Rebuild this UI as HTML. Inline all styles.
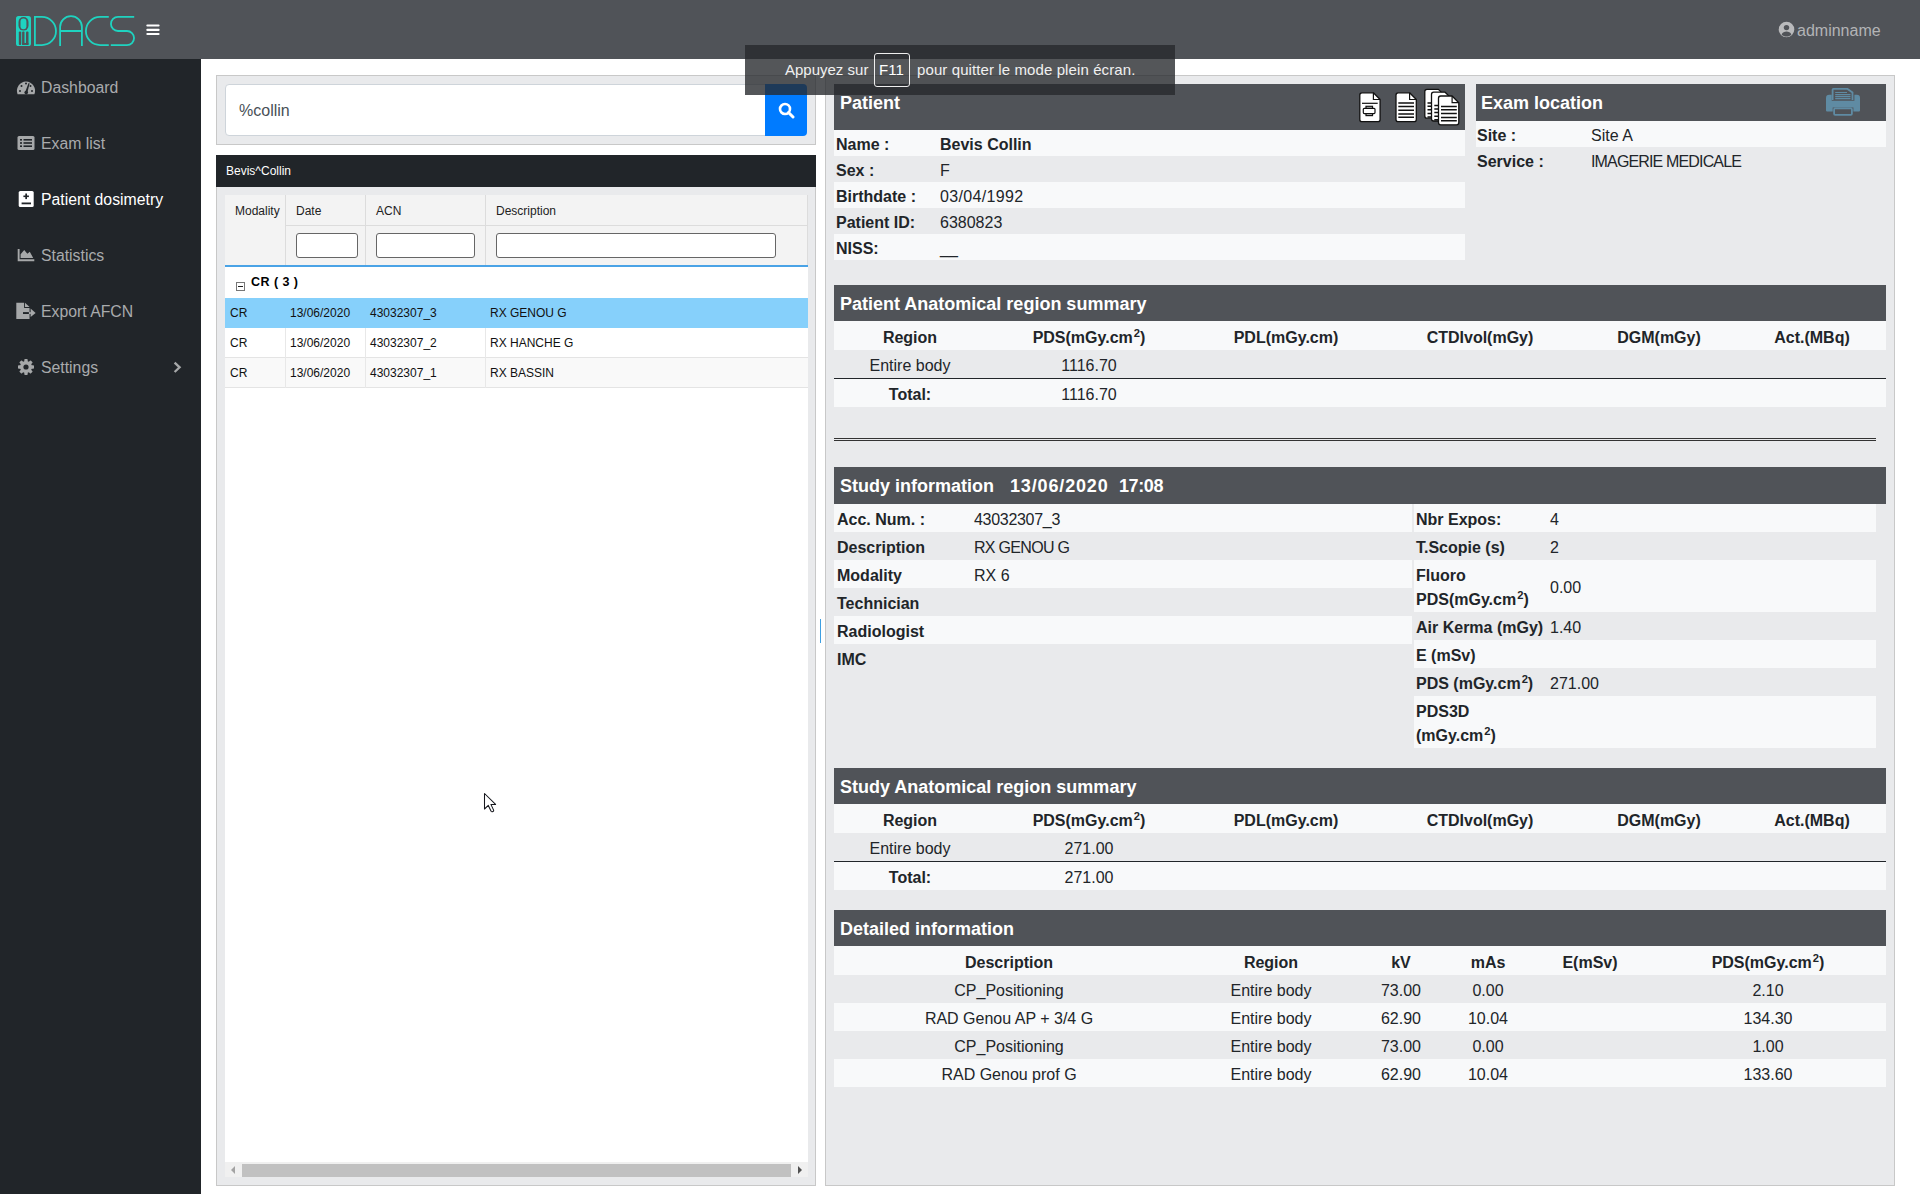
<!DOCTYPE html>
<html><head><meta charset="utf-8">
<style>
*{box-sizing:border-box;margin:0;padding:0}
html,body{width:1920px;height:1200px;overflow:hidden;background:#fff;font-family:"Liberation Sans",sans-serif;color:#212529}
.a{position:absolute}
#hdr{left:0;top:0;width:1920px;height:59px;background:#505358}
#side{left:0;top:59px;width:201px;height:1135px;background:#212529}
.nav{position:absolute;left:0;width:201px;height:56px;color:#a9abad;font-size:15.8px}
.nav .t{position:absolute;left:41px;top:1px;line-height:56px;white-space:nowrap}
.nav svg{position:absolute}
#lcard{left:216px;top:75px;width:600px;height:70px;background:#e9eaec;border:1px solid #c8c8c8}
#lpanel{left:216px;top:155px;width:600px;height:1031px;background:#e9eaec;border:1px solid #c8c8c8;border-top:0}
#rpanel{left:825px;top:75px;width:1070px;height:1111px;background:#e9eaec;border:1px solid #c8c8c8}
.dh{position:absolute;background:#505358;color:#fff;font-weight:bold;font-size:18px}
.row{position:absolute;font-size:15px;white-space:nowrap}
.l{background:#f8f9fa}
.g{background:#e9eaec}
b{font-weight:bold}
.ht{margin-top:1px;color:#fff;font-weight:bold;font-size:18px;line-height:37px;white-space:nowrap}
.lb{margin-top:2px;font-weight:bold;font-size:16px;line-height:26px;color:#212529;white-space:nowrap}
.vl{margin-top:2px;font-size:16px;line-height:26px;color:#212529;white-space:nowrap}
.c{width:300px;text-align:center}
sup{font-size:.7em;line-height:0;vertical-align:.5em;margin-left:1px}

.gh{position:absolute;top:8px;font-size:12px;line-height:16px;color:#222}
.fi{position:absolute;top:38px;height:25px;background:#fff;border:1px solid #666;border-radius:3px}
.gr{position:absolute;left:0;width:583px;height:30px;border-bottom:1px solid #e4e4e4;font-size:12px;color:#111}
.gr span{position:absolute;top:7px;line-height:16px;white-space:nowrap}
.gr i{position:absolute;top:0;width:1px;height:30px;background:#e8e8e8}

</style></head><body>
<div id="hdr" class="a">
  <svg class="a" style="left:0;top:0" width="170" height="59" viewBox="0 0 170 59">
  <g fill="#1fd3c0">
   <rect x="16" y="16" width="15" height="30" rx="2.6"/>
  </g>
  <g fill="#505358">
   <rect x="18.5" y="17" width="10" height="13.6" rx="5"/>
   <rect x="18.8" y="31.6" width="2.4" height="13.3" rx="1"/>
   <rect x="22.1" y="31.6" width="2.6" height="13.3" rx="1"/>
   <rect x="26" y="31.6" width="2.5" height="13.3" rx="1"/>
   <rect x="22.1" y="42.9" width="6.4" height="2" />
  </g>
  <rect x="20.5" y="18.6" width="5.9" height="10.6" rx="2.9" fill="#1fd3c0"/>
  <rect x="24.7" y="31" width="1.3" height="11.9" fill="#1fd3c0"/>
  <g fill="none" stroke="#1fd3c0" stroke-width="1.8">
   <path d="M34.9 16.9 H41.9 A14.1 14.1 0 0 1 41.9 45.1 H34.9 Z"/>
   <path d="M60.1 46 V27 A10.9 10.9 0 0 1 81.9 27 V46 M60.1 31 H81.9"/>
   <path d="M108.8 16.9 H100 A14.1 14.1 0 0 0 100 45.1 H108.8"/>
   <path d="M134.2 16.9 H118 A7.05 7.05 0 0 0 118 31 H127 A7.05 7.05 0 0 1 127 45.1 H110.8"/>
  </g>
  <g fill="#fff"><rect x="146.3" y="24.4" width="13.3" height="2.2" rx="1"/><rect x="146.3" y="28.7" width="13.3" height="2.2" rx="1"/><rect x="146.3" y="32.9" width="13.3" height="2.2" rx="1"/></g>
</svg>
  <svg class="a" style="left:1778px;top:21px" width="17" height="17" viewBox="0 0 17 17"><circle cx="8.5" cy="8.5" r="7.8" fill="#b9babc"/><circle cx="8.5" cy="6.6" r="2.7" fill="#505358"/><path d="M3.6 13.4 C4.6 11.2 6.4 10.4 8.5 10.4 C10.6 10.4 12.4 11.2 13.4 13.4 C12 14.8 10.4 15.4 8.5 15.4 C6.6 15.4 5 14.8 3.6 13.4Z" fill="#505358"/></svg>
  <div class="a" style="left:1797px;top:21px;font-size:16px;color:#b3b4b6;line-height:20px">adminname</div>
</div>
<div id="side" class="a">
  <svg class="a" style="left:0;top:0" width="201" height="330" viewBox="0 59 201 330">
   <g fill="#a6a8a9">
    <path d="M17.6 94.2 A9.1 9.1 0 1 1 34.4 94.2 Z"/>
    <rect x="17.5" y="136" width="17" height="14" rx="1.5"/>
    <path d="M17.7 249 h1.9 v10.3 h14.7 v1.9 h-16.6z M20.6 258 v-3.8 l3.6-4.1 l3.2 3.6 l2.4-2 l3.4 6.3z"/>
    <path d="M16.3 302.8 H24.1 V308 H29.55 V319 H16.3 Z"/>
    <path d="M25 302.8 L29.55 307.1 H25 Z"/>
    <rect x="28.9" y="312.1" width="2" height="1.9"/>
    <path d="M30.6 308.6 L35.6 312.9 L30.6 317.1 Z"/>
    <circle cx="26" cy="367" r="6"/><rect x="24.3" y="359" width="3.4" height="16" rx="0.8" transform="rotate(0 26 367)"/><rect x="24.3" y="359" width="3.4" height="16" rx="0.8" transform="rotate(45 26 367)"/><rect x="24.3" y="359" width="3.4" height="16" rx="0.8" transform="rotate(90 26 367)"/><rect x="24.3" y="359" width="3.4" height="16" rx="0.8" transform="rotate(135 26 367)"/>
   </g>
   <g fill="#212529">
    <circle cx="20" cy="91" r="1"/><circle cx="21.5" cy="86" r="1"/><circle cx="26" cy="83.5" r="1"/><circle cx="30.5" cy="86" r="1"/><circle cx="32" cy="91" r="1"/>
    <path d="M25 92.5 L28.6 83 L29.6 83.4 L27.2 93.2 Z"/><circle cx="26.2" cy="92.6" r="1.8"/>
    <rect x="20" y="139" width="2" height="1.6"/><rect x="20" y="142.2" width="2" height="1.6"/><rect x="20" y="145.4" width="2" height="1.6"/>
    <rect x="23.5" y="139" width="8.5" height="1.6"/><rect x="23.5" y="142.2" width="8.5" height="1.6"/><rect x="23.5" y="145.4" width="8.5" height="1.6"/>
    <circle cx="26" cy="367" r="2.6"/>
    <rect x="23" y="312.1" width="5.9" height="1.9"/>
   </g>
   <rect x="18.7" y="191" width="15" height="16" rx="1.6" fill="#fff"/>
   <g fill="#212529"><rect x="25.3" y="193.5" width="1.7" height="5.6"/><rect x="23.4" y="195.5" width="5.5" height="1.6"/><rect x="21.6" y="202.5" width="9.4" height="1.8"/></g>
   <path d="M174.6 362.6 L179.6 367.3 L174.6 372" fill="none" stroke="#a6a8a9" stroke-width="2.3"/>
  </svg>

  <div class="nav" style="top:0"><div class="t">Dashboard</div></div>
  <div class="nav" style="top:56px"><div class="t">Exam list</div></div>
  <div class="nav" style="top:112px;color:#fff"><div class="t">Patient dosimetry</div></div>
  <div class="nav" style="top:168px"><div class="t">Statistics</div></div>
  <div class="nav" style="top:224px"><div class="t">Export AFCN</div></div>
  <div class="nav" style="top:280px"><div class="t">Settings</div></div>
</div>

<div id="lcard" class="a">
  <div class="a" style="left:8px;top:8px;width:541px;height:52px;background:#fff;border:1px solid #ced4da;border-radius:4px 0 0 4px"></div>
  <div class="a" style="left:22px;top:26px;font-size:16px;color:#495057;line-height:18px">%collin</div>
  <div class="a" style="left:548px;top:8px;width:42px;height:52px;background:#007bff;border-radius:0 4px 4px 0"></div>
  <svg class="a" style="left:561px;top:26px" width="17" height="17" viewBox="0 0 17 17"><circle cx="7" cy="7" r="5" fill="none" stroke="#fff" stroke-width="2.6"/><path d="M10.5 10.5 L15 15" stroke="#fff" stroke-width="3" stroke-linecap="round"/></svg>
</div>
<div id="lpanel" class="a">
  <div class="a" style="left:-1px;top:0;width:600px;height:32px;background:#212529;color:#fff;font-size:12px;line-height:32px;padding-left:10px">Bevis^Collin</div>
  <div class="a" id="grid" style="left:8px;top:40px;width:583px;height:982px;background:#fff">
    <div class="a" style="left:0;top:0;width:583px;height:72px;background:#f3f3f3"></div>
    <div class="a" style="left:60px;top:0;width:1px;height:72px;background:#dcdcdc"></div>
    <div class="a" style="left:140px;top:0;width:1px;height:72px;background:#dcdcdc"></div>
    <div class="a" style="left:260px;top:0;width:1px;height:72px;background:#dcdcdc"></div>
    <div class="a" style="left:582px;top:0;width:1px;height:72px;background:#dcdcdc"></div>
    <div class="a" style="left:61px;top:30px;width:522px;height:1px;background:#dcdcdc"></div>
    <div class="gh" style="left:10px">Modality</div>
    <div class="gh" style="left:71px">Date</div>
    <div class="gh" style="left:151px">ACN</div>
    <div class="gh" style="left:271px">Description</div>
    <div class="fi" style="left:71px;width:62px"></div>
    <div class="fi" style="left:151px;width:99px"></div>
    <div class="fi" style="left:271px;width:280px"></div>
    <div class="a" style="left:0;top:70px;width:583px;height:2px;background:#4aa3e6"></div>
    <div class="a" style="left:11px;top:87px;width:9px;height:9px;border:1px solid #777;background:#fff"></div>
    <div class="a" style="left:13px;top:91px;width:5px;height:1px;background:#222"></div>
    <div class="a" style="left:26px;top:79px;font-size:12.5px;font-weight:bold;line-height:16px;color:#000;letter-spacing:0.45px">CR ( 3 )</div>
    <div class="gr" style="top:103px;background:#86d0fb;border-color:#86d0fb"><span style="left:5px">CR</span><span style="left:65px">13/06/2020</span><span style="left:145px">43032307_3</span><span style="left:265px">RX GENOU G</span></div>
    <div class="gr" style="top:133px;background:#fff"><span style="left:5px">CR</span><span style="left:65px">13/06/2020</span><span style="left:145px">43032307_2</span><span style="left:265px">RX HANCHE G</span><i style="left:60px"></i><i style="left:140px"></i><i style="left:260px"></i></div>
    <div class="gr" style="top:163px;background:#f9f9f9"><span style="left:5px">CR</span><span style="left:65px">13/06/2020</span><span style="left:145px">43032307_1</span><span style="left:265px">RX BASSIN</span><i style="left:60px"></i><i style="left:140px"></i><i style="left:260px"></i></div>
  </div>
  <div class="a" style="left:8px;top:1007px;width:583px;height:15px;background:#f0f0f0"></div>
  <div class="a" style="left:25px;top:1009px;width:549px;height:13px;background:#c1c1c1"></div>
  <svg class="a" style="left:12px;top:1010px" width="8" height="10"><path d="M6 1 L2 5 L6 9Z" fill="#a3a3a3"/></svg>
  <svg class="a" style="left:579px;top:1010px" width="8" height="10"><path d="M2 1 L6 5 L2 9Z" fill="#505050"/></svg>
</div>

<div id="rpanel" class="a"></div>
<div id="rc">
<div class="a" style="left:834px;top:84px;width:631px;height:46px;background:#505358;"></div>
<div class="a ht" style="left:840px;top:84px;">Patient</div>
<div class="a" style="left:834px;top:130px;width:631px;height:26px;background:#f8f9fa;"></div>
<div class="a lb" style="left:836px;top:130px;">Name :</div>
<div class="a lb" style="left:940px;top:130px;">Bevis Collin</div>
<div class="a lb" style="left:836px;top:156px;">Sex :</div>
<div class="a vl" style="left:940px;top:156px;">F</div>
<div class="a" style="left:834px;top:182px;width:631px;height:26px;background:#f8f9fa;"></div>
<div class="a lb" style="left:836px;top:182px;">Birthdate :</div>
<div class="a vl" style="left:940px;top:182px;letter-spacing:0.35px">03/04/1992</div>
<div class="a lb" style="left:836px;top:208px;">Patient ID:</div>
<div class="a vl" style="left:940px;top:208px;">6380823</div>
<div class="a" style="left:834px;top:234px;width:631px;height:26px;background:#f8f9fa;"></div>
<div class="a lb" style="left:836px;top:234px;">NISS:</div>
<div class="a vl" style="left:940px;top:234px;">__</div>
<div class="a" style="left:1476px;top:84px;width:410px;height:37px;background:#505358;"></div>
<div class="a ht" style="left:1481px;top:84px;">Exam location</div>
<div class="a" style="left:1476px;top:121px;width:410px;height:26px;background:#f8f9fa;"></div>
<div class="a lb" style="left:1477px;top:121px;">Site :</div>
<div class="a vl" style="left:1591px;top:121px;">Site A</div>
<div class="a lb" style="left:1477px;top:147px;">Service :</div>
<div class="a vl" style="left:1591px;top:147px;letter-spacing:-0.85px">IMAGERIE MEDICALE</div>
<div class="a" style="left:834px;top:285px;width:1052px;height:36px;background:#505358;"></div>
<div class="a ht" style="left:840px;top:285px;">Patient Anatomical region summary</div>
<div class="a" style="left:834px;top:321px;width:1052px;height:29px;background:#f8f9fa;"></div>
<div class="a c lb" style="left:760px;top:321px;line-height:29px">Region</div>
<div class="a c lb" style="left:939px;top:321px;line-height:29px">PDS(mGy.cm<sup>2</sup>)</div>
<div class="a c lb" style="left:1136px;top:321px;line-height:29px">PDL(mGy.cm)</div>
<div class="a c lb" style="left:1330px;top:321px;line-height:29px">CTDIvol(mGy)</div>
<div class="a c lb" style="left:1509px;top:321px;line-height:29px">DGM(mGy)</div>
<div class="a c lb" style="left:1662px;top:321px;line-height:29px">Act.(MBq)</div>
<div class="a c vl" style="left:760px;top:350px;line-height:28px">Entire body</div>
<div class="a c vl" style="left:939px;top:350px;line-height:28px">1116.70</div>
<div class="a" style="left:834px;top:378px;width:1052px;height:1px;background:#212529;"></div>
<div class="a" style="left:834px;top:379px;width:1052px;height:28px;background:#f8f9fa;"></div>
<div class="a c lb" style="left:760px;top:379px;line-height:28px">Total:</div>
<div class="a c vl" style="left:939px;top:379px;line-height:28px">1116.70</div>
<div class="a" style="left:834px;top:438px;width:1042px;height:1px;background:#333;"></div>
<div class="a" style="left:834px;top:440px;width:1042px;height:1px;background:#333;"></div>
<div class="a" style="left:834px;top:467px;width:1052px;height:37px;background:#505358;"></div>
<div class="a ht" style="left:840px;top:467px">Study information</div><div class="a ht" style="left:1010px;top:467px;letter-spacing:0.85px">13/06/2020</div><div class="a ht" style="left:1119px;top:467px;letter-spacing:-0.4px">17:08</div>
<div class="a" style="left:834px;top:504px;width:578px;height:28px;background:#f8f9fa;"></div>
<div class="a lb" style="left:837px;top:504px;line-height:28px">Acc. Num. :</div>
<div class="a vl" style="left:974px;top:504px;line-height:28px;letter-spacing:-0.3px">43032307_3</div>
<div class="a lb" style="left:837px;top:532px;line-height:28px">Description</div>
<div class="a vl" style="left:974px;top:532px;line-height:28px;letter-spacing:-0.7px">RX GENOU G</div>
<div class="a" style="left:834px;top:560px;width:578px;height:28px;background:#f8f9fa;"></div>
<div class="a lb" style="left:837px;top:560px;line-height:28px">Modality</div>
<div class="a vl" style="left:974px;top:560px;line-height:28px">RX 6</div>
<div class="a lb" style="left:837px;top:588px;line-height:28px">Technician</div>
<div class="a" style="left:834px;top:616px;width:578px;height:28px;background:#f8f9fa;"></div>
<div class="a lb" style="left:837px;top:616px;line-height:28px">Radiologist</div>
<div class="a lb" style="left:837px;top:644px;line-height:28px">IMC</div>
<div class="a" style="left:1414px;top:504px;width:462px;height:28px;background:#f8f9fa;"></div>
<div class="a lb" style="left:1416px;top:504px;line-height:28px">Nbr Expos:</div>
<div class="a vl" style="left:1550px;top:504px;line-height:28px">4</div>
<div class="a lb" style="left:1416px;top:532px;line-height:28px">T.Scopie (s)</div>
<div class="a vl" style="left:1550px;top:532px;line-height:28px">2</div>
<div class="a" style="left:1414px;top:560px;width:462px;height:52px;background:#f8f9fa;"></div>
<div class="a lb" style="left:1416px;top:562px;line-height:24px">Fluoro<br>PDS(mGy.cm<sup>2</sup>)</div>
<div class="a vl" style="left:1550px;top:560px;line-height:52px">0.00</div>
<div class="a lb" style="left:1416px;top:612px;line-height:28px">Air Kerma (mGy)</div>
<div class="a vl" style="left:1550px;top:612px;line-height:28px">1.40</div>
<div class="a" style="left:1414px;top:640px;width:462px;height:28px;background:#f8f9fa;"></div>
<div class="a lb" style="left:1416px;top:640px;line-height:28px">E (mSv)</div>
<div class="a lb" style="left:1416px;top:668px;line-height:28px">PDS (mGy.cm<sup>2</sup>)</div>
<div class="a vl" style="left:1550px;top:668px;line-height:28px">271.00</div>
<div class="a" style="left:1414px;top:696px;width:462px;height:52px;background:#f8f9fa;"></div>
<div class="a lb" style="left:1416px;top:698px;line-height:24px">PDS3D<br>(mGy.cm<sup>2</sup>)</div>
<div class="a" style="left:834px;top:768px;width:1052px;height:36px;background:#505358;"></div>
<div class="a ht" style="left:840px;top:768px;">Study Anatomical region summary</div>
<div class="a" style="left:834px;top:804px;width:1052px;height:29px;background:#f8f9fa;"></div>
<div class="a c lb" style="left:760px;top:804px;line-height:29px">Region</div>
<div class="a c lb" style="left:939px;top:804px;line-height:29px">PDS(mGy.cm<sup>2</sup>)</div>
<div class="a c lb" style="left:1136px;top:804px;line-height:29px">PDL(mGy.cm)</div>
<div class="a c lb" style="left:1330px;top:804px;line-height:29px">CTDIvol(mGy)</div>
<div class="a c lb" style="left:1509px;top:804px;line-height:29px">DGM(mGy)</div>
<div class="a c lb" style="left:1662px;top:804px;line-height:29px">Act.(MBq)</div>
<div class="a c vl" style="left:760px;top:833px;line-height:28px">Entire body</div>
<div class="a c vl" style="left:939px;top:833px;line-height:28px">271.00</div>
<div class="a" style="left:834px;top:861px;width:1052px;height:1px;background:#212529;"></div>
<div class="a" style="left:834px;top:862px;width:1052px;height:28px;background:#f8f9fa;"></div>
<div class="a c lb" style="left:760px;top:862px;line-height:28px">Total:</div>
<div class="a c vl" style="left:939px;top:862px;line-height:28px">271.00</div>
<div class="a" style="left:834px;top:910px;width:1052px;height:36px;background:#505358;"></div>
<div class="a ht" style="left:840px;top:910px;">Detailed information</div>
<div class="a" style="left:834px;top:946px;width:1052px;height:29px;background:#f8f9fa;"></div>
<div class="a c lb" style="left:859px;top:946px;line-height:29px">Description</div>
<div class="a c lb" style="left:1121px;top:946px;line-height:29px">Region</div>
<div class="a c lb" style="left:1251px;top:946px;line-height:29px">kV</div>
<div class="a c lb" style="left:1338px;top:946px;line-height:29px">mAs</div>
<div class="a c lb" style="left:1440px;top:946px;line-height:29px">E(mSv)</div>
<div class="a c lb" style="left:1618px;top:946px;line-height:29px">PDS(mGy.cm<sup>2</sup>)</div>
<div class="a c vl" style="left:859px;top:975px;line-height:28px">CP_Positioning</div>
<div class="a c vl" style="left:1121px;top:975px;line-height:28px">Entire body</div>
<div class="a c vl" style="left:1251px;top:975px;line-height:28px">73.00</div>
<div class="a c vl" style="left:1338px;top:975px;line-height:28px">0.00</div>
<div class="a c vl" style="left:1618px;top:975px;line-height:28px">2.10</div>
<div class="a" style="left:834px;top:1003px;width:1052px;height:28px;background:#f8f9fa;"></div>
<div class="a c vl" style="left:859px;top:1003px;line-height:28px">RAD Genou AP + 3/4 G</div>
<div class="a c vl" style="left:1121px;top:1003px;line-height:28px">Entire body</div>
<div class="a c vl" style="left:1251px;top:1003px;line-height:28px">62.90</div>
<div class="a c vl" style="left:1338px;top:1003px;line-height:28px">10.04</div>
<div class="a c vl" style="left:1618px;top:1003px;line-height:28px">134.30</div>
<div class="a c vl" style="left:859px;top:1031px;line-height:28px">CP_Positioning</div>
<div class="a c vl" style="left:1121px;top:1031px;line-height:28px">Entire body</div>
<div class="a c vl" style="left:1251px;top:1031px;line-height:28px">73.00</div>
<div class="a c vl" style="left:1338px;top:1031px;line-height:28px">0.00</div>
<div class="a c vl" style="left:1618px;top:1031px;line-height:28px">1.00</div>
<div class="a" style="left:834px;top:1059px;width:1052px;height:28px;background:#f8f9fa;"></div>
<div class="a c vl" style="left:859px;top:1059px;line-height:28px">RAD Genou prof G</div>
<div class="a c vl" style="left:1121px;top:1059px;line-height:28px">Entire body</div>
<div class="a c vl" style="left:1251px;top:1059px;line-height:28px">62.90</div>
<div class="a c vl" style="left:1338px;top:1059px;line-height:28px">10.04</div>
<div class="a c vl" style="left:1618px;top:1059px;line-height:28px">133.60</div>
</div>

<svg class="a" style="left:1355px;top:86px" width="110" height="42" viewBox="1355 86 110 42">
 <defs>
  <path id="doc" d="M0 2.2 Q0 0 2.2 0 H13.6 L20.3 6.7 V26.6 Q20.3 28.8 18.1 28.8 H2.2 Q0 28.8 0 26.6 Z"/>
 </defs>
 <g stroke="#111" stroke-width="1.3" fill="#fff" stroke-linejoin="round">
  <use href="#doc" x="1359.8" y="92.8"/>
  <use href="#doc" x="1396" y="92.8"/>
  <use href="#doc" x="1424.8" y="89.4"/>
  <use href="#doc" x="1431.5" y="92.2"/>
  <use href="#doc" x="1438.5" y="96"/>
 </g>
 <g stroke="#111" stroke-width="1.2" fill="none">
  <path d="M1373.4 92.8 V99.5 H1380.1"/>
  <path d="M1409.6 92.8 V99.5 H1416.3"/>
  <path d="M1452.1 96 V102.7 H1458.8"/>
  <path d="M1362 103.3 H1377.7"/>
  <rect x="1363.3" y="108.3" width="11.7" height="5.3" rx="1"/>
  <rect x="1366" y="106.3" width="6.5" height="2"/>
  <rect x="1366" y="113.6" width="6.5" height="2"/>
 </g>
 <g stroke="#111" stroke-width="1.5">
  <path d="M1398.3 103 H1414 M1398.3 106.5 H1414 M1398.3 110.2 H1414 M1398.3 114 H1414 M1398.3 117.2 H1414"/>
  <path d="M1427.5 103 H1431 M1427.5 106.3 H1431 M1427.5 109.8 H1431 M1427.5 113.5 H1431 M1427.5 117 H1431 M1434.3 105.5 H1438 M1434.3 109 H1438 M1434.3 112.6 H1438 M1434.3 116.2 H1438 M1434.3 119.8 H1438"/>
  <path d="M1441 106.5 H1456.8 M1441 109.8 H1456.8 M1441 113.6 H1456.8 M1441 117.5 H1456.8 M1441 120.7 H1456.8"/>
 </g>
</svg>
<svg class="a" style="left:1826px;top:88px" width="34" height="28" viewBox="0 0 34 28">
 <g fill="#5f8ba3">
  <path d="M0 10 Q0 6.8 3.2 6.8 H5.7 V12.8 H28.4 V6.8 H30.8 Q34 6.8 34 10 V22.5 Q34 23.6 32.9 23.6 H27.4 V19.6 H6.7 V23.6 H1.1 Q0 23.6 0 22.5 Z"/>
 </g>
 <g fill="none" stroke="#5f8ba3" stroke-width="1.8">
  <path d="M6.6 12 V1.6 Q6.6 0.9 7.4 0.9 H21.5 L26.5 4.5 V12"/>
  <rect x="8.1" y="20.4" width="17.8" height="6.4" rx="1"/>
 </g>
 <g stroke="#5f8ba3" stroke-width="1.2"><path d="M9.2 4.5 H21 M9.2 6.6 H24.5 M9.2 8.6 H24.5 M9.2 10.7 H24.5"/></g>
</svg>
<div class="a" style="left:745px;top:45px;width:430px;height:50px;background:rgba(38,40,44,0.79)"></div>
<div class="a" style="left:785px;top:60px;font-size:15px;line-height:20px;color:#f0f0f0;white-space:nowrap">Appuyez sur</div>
<div class="a" style="left:874px;top:53px;width:36px;height:34px;border:1px solid #eee;border-radius:3px"></div>
<div class="a" style="left:879px;top:60px;font-size:15px;line-height:20px;color:#fff">F11</div>
<div class="a" style="left:917px;top:60px;font-size:15px;line-height:20px;color:#f0f0f0;letter-spacing:0.1px;white-space:nowrap">pour quitter le mode plein écran.</div>
<div class="a" style="left:820px;top:619px;width:1px;height:24px;background:#3d9fe2"></div>
<svg class="a" style="left:480px;top:789px" width="22" height="28" viewBox="480 789 22 28">
 <path d="M484.5 793.5 V809 L488.3 805.4 L491.1 811.3 Q491.6 812 492.4 811.7 L493.3 811.3 Q493.9 810.8 493.6 810.1 L490.9 804.4 H495.6 Z" fill="#fff" stroke="#15161c" stroke-width="1.05" stroke-linejoin="round"/>
</svg>
</body></html>
